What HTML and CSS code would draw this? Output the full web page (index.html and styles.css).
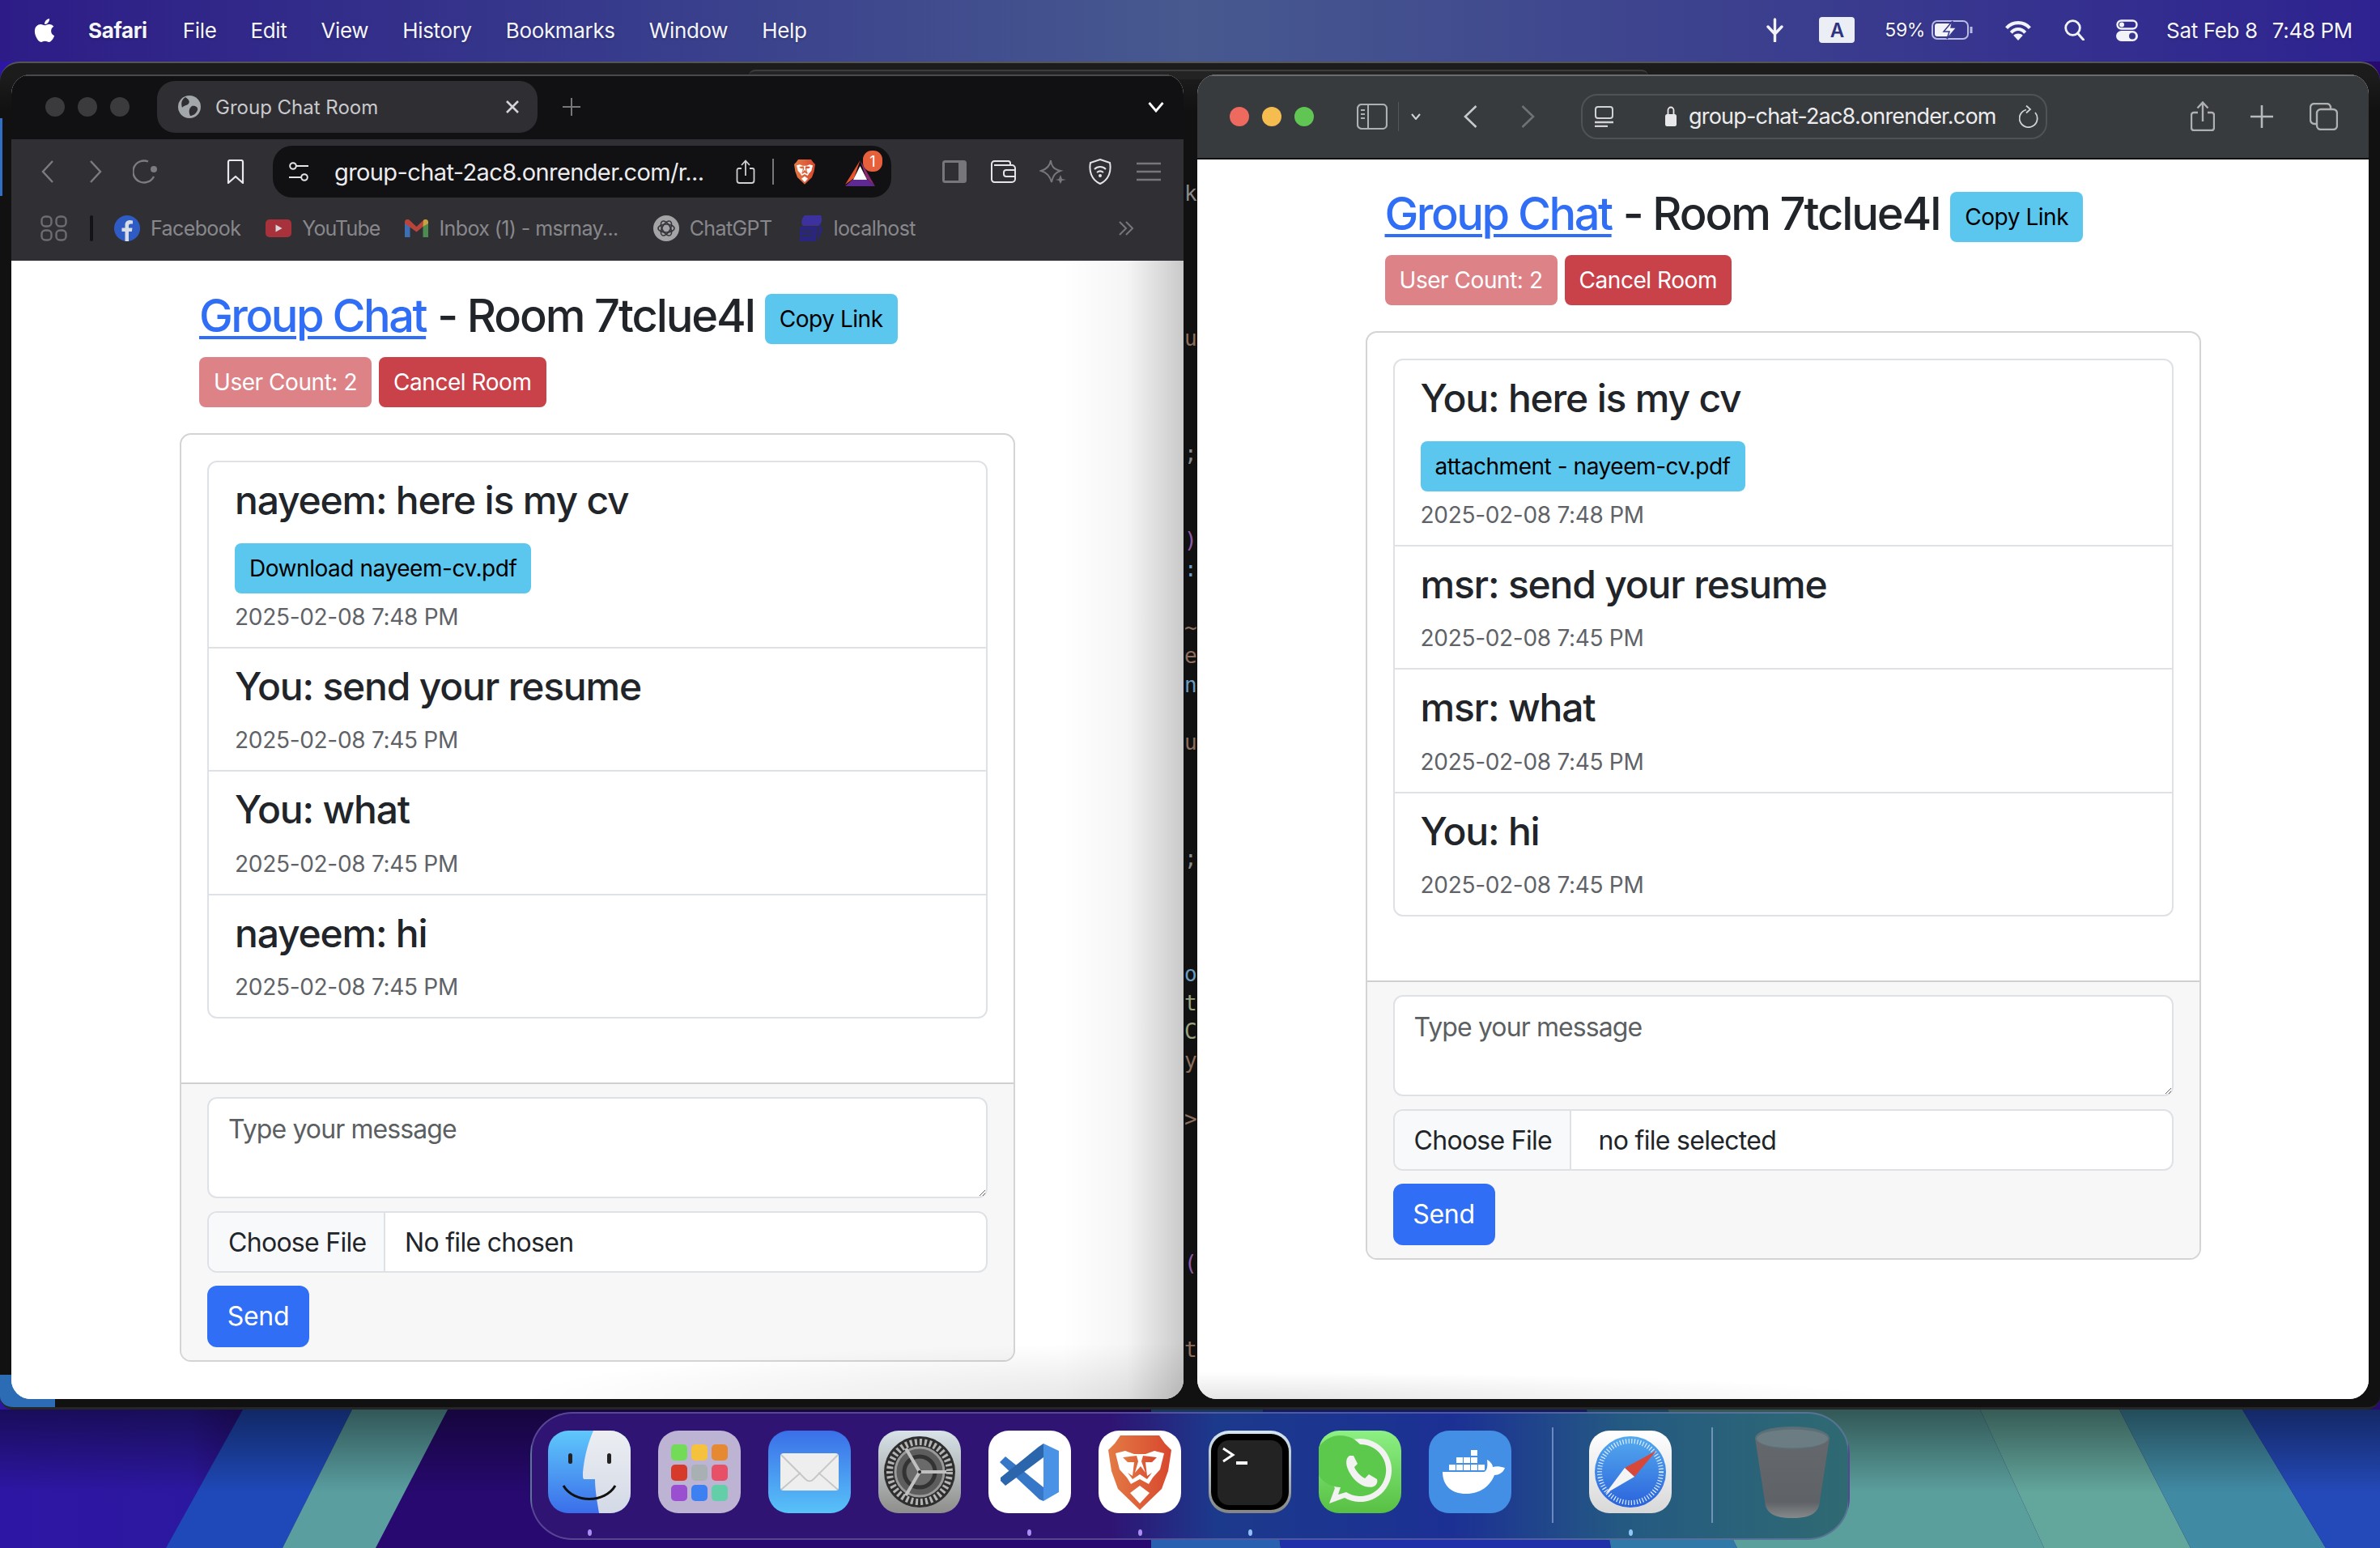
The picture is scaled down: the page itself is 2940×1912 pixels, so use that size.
FILE: index.html
```html
<!DOCTYPE html>
<html lang="en">
<head>
<meta charset="utf-8">
<title>Group Chat Room</title>
<link rel="stylesheet" href="styles.css">
</head>
<body>
<svg class="defs" width="0" height="0" aria-hidden="true">
  <defs>
    <linearGradient id="braveG" x1="0" x2="1" y1="0" y2="0"><stop offset="0" stop-color="#e37b45"/><stop offset="1" stop-color="#d8472e"/></linearGradient>
    <symbol id="lion" viewBox="0 0 102 102">
      <path fill="url(#braveG)" d="M27 6H75L82 16L90 24L86 50L78 72L51 98L24 72L16 50L12 24L20 16Z"/>
      <path fill="#fff" d="M21 28L33 25L44 29H58L69 25L81 28L76 48L67 58L62 66L51 60L40 66L35 58L26 48Z"/>
      <path fill="url(#braveG)" d="M30 33L47 31L49 38L45 52L52 44L58 52L53 38L55 31L72 33L66 39H58L60 56L66 52L60 60L51 54L42 60L36 52L42 56L44 39H36Z"/>
      <path fill="#fff" d="M51 68L63 77L51 90L39 77Z"/>
    </symbol>
  </defs>
</svg>

<div class="desktop">
  <svg class="wallpaper" viewBox="0 0 2940 1912" width="2940" height="1912" aria-hidden="true">
    <defs>
      <linearGradient id="wpBase" x1="0" x2="1" y1="0" y2="0"><stop offset="0" stop-color="#2e16a4"/><stop offset=".08" stop-color="#2c18a0"/><stop offset=".115" stop-color="#27096f"/><stop offset="1" stop-color="#27096f"/></linearGradient>
      <linearGradient id="wpTop" x1="0" x2="0" y1="0" y2="1"><stop offset="0" stop-color="#000" stop-opacity=".45"/><stop offset=".6" stop-color="#000" stop-opacity="0"/></linearGradient>
    </defs>
    <rect width="2940" height="1912" fill="url(#wpBase)"/>
    <polygon fill="#1f49b8" points="300,1741 435,1741 349,1912 205,1912"/>
    <polygon fill="#5a9ea0" points="435,1741 553,1741 464,1912 349,1912"/>
    <polygon fill="#2a60b0" points="1422,1741 1560,1741 1582,1912 1422,1912"/>
    <polygon fill="#2030a8" points="1560,1741 1960,1741 1990,1912 1582,1912"/>
    <polygon fill="#2f78a8" points="1960,1741 2060,1741 2146,1912 1990,1912"/>
    <polygon fill="#5b9f9d" points="2060,1741 2446,1741 2525,1912 2146,1912"/>
    <polygon fill="#63a69c" points="2446,1741 2618,1741 2706,1912 2525,1912"/>
    <polygon fill="#418aa3" points="2618,1741 2770,1741 2873,1912 2706,1912"/>
    <polygon fill="#2449b8" points="2770,1741 2940,1741 2940,1912 2873,1912"/>
    <rect y="1741" width="2940" height="171" fill="url(#wpTop)"/>
  </svg>

  <header class="menubar">
    <div class="menu-left">
      <svg class="apple" viewBox="0 0 384 512" width="28" height="33"><path fill="#fff" d="M318.7 268.7c-.2-36.7 16.4-64.4 50-84.8-18.8-26.9-47.2-41.7-84.7-44.6-35.5-2.8-74.3 20.7-88.5 20.7-15 0-49.4-19.7-76.4-19.7C63.3 141.2 4 184.8 4 273.5q0 39.3 14.4 81.2c12.8 36.7 59 126.7 107.2 125.2 25.2-.6 43-17.9 75.8-17.9 31.8 0 48.3 17.9 76.4 17.9 48.6-.7 90.4-82.5 102.6-119.3-65.2-30.7-61.7-90-61.7-91.9zm-56.6-164.2c27.3-32.4 24.8-61.9 24-72.5-24.1 1.4-52 16.4-67.9 34.9-17.5 19.8-27.8 44.3-25.6 71.9 26.1 2 49.9-11.4 69.5-34.3z"/></svg>
      <span class="app-name">Safari</span>
      <span>File</span><span>Edit</span><span>View</span><span>History</span><span>Bookmarks</span><span>Window</span><span>Help</span>
    </div>
    <div class="menu-right">
      <svg class="st-fork" viewBox="0 0 23 30" width="23" height="30"><path fill="none" stroke="#f2f3f8" stroke-width="3.4" stroke-linecap="round" stroke-linejoin="round" d="M11.5 2V29M3 11L11.5 20L20 11M11.5 8V14"/></svg>
      <span class="st-a">A</span>
      <span class="st-pct">59%</span>
      <svg class="st-batt" viewBox="0 0 51 24" width="51" height="24"><rect x="1" y="1" width="44" height="22" rx="6" fill="none" stroke="#b9bce0" stroke-width="2"/><rect x="4" y="4" width="20" height="16" rx="3" fill="#f2f3f8"/><path d="M49 8V16" stroke="#b9bce0" stroke-width="3"/><path fill="#f2f3f8" stroke="#37388c" stroke-width="1.5" d="M26 1L15 14H22L19 23L31 9H24Z"/></svg>
      <svg class="st-wifi" viewBox="0 0 34 26" width="34" height="25"><path fill="none" stroke="#f2f3f8" stroke-width="4.2" d="M2 10C10 1 24 1 32 10M8 16C13 10 21 10 26 16"/><path fill="#f2f3f8" d="M17 26L11 19.5C14 16.5 20 16.5 23 19.5Z"/></svg>
      <svg class="st-search" viewBox="0 0 25 26" width="25" height="26"><circle cx="10.5" cy="10.5" r="8.8" fill="none" stroke="#f2f3f8" stroke-width="2.8"/><path d="M16.5 17L23.5 25" stroke="#f2f3f8" stroke-width="3" stroke-linecap="round"/></svg>
      <svg class="st-cc" viewBox="0 0 27 27" width="27" height="27"><rect x="1.5" y="1.5" width="24" height="10" rx="5" fill="none" stroke="#f2f3f8" stroke-width="2.4"/><circle cx="7" cy="6.500" r="3" fill="#f2f3f8"/><rect y="14" width="27" height="13" rx="6.500" fill="#f2f3f8"/><circle cx="20" cy="20.500" r="4" fill="#37388c"/></svg>
      <span class="st-date">Sat Feb 8</span><span class="st-time">7:48 PM</span>
    </div>
  </header>

  <div class="back-window">
    <div class="back-tab"></div>
    <div class="back-blue"></div>
    <div class="back-status"></div>
    <pre class="code"><span class="c-g">k</span>




<span class="c-o">u</span>



<span class="c-g">;</span>


<span class="c-p">)</span>
<span class="c-b">:</span>

<span class="c-o">~</span>
<span class="c-o">e</span>
<span class="c-b">n</span>

<span class="c-o">u</span>



<span class="c-g">;</span>



<span class="c-b">o</span>
<span class="c-y">t</span>
<span class="c-y">C</span>
<span class="c-o">y</span>

<span class="c-o">&gt;</span>




<span class="c-p">(</span>


<span class="c-o">t</span></pre>
  </div>

  <section class="window brave">
    <div class="tabstrip">
      <div class="dots"><i></i><i></i><i></i></div>
      <div class="tab">
        <svg viewBox="0 0 28 28" width="28" height="28"><circle cx="14" cy="14" r="14" fill="#a3a7ab"/><path fill="#2f2f33" d="M9 2C13 5 15 7 13 10C10 13 7 12 5 15C4 11 3 6 9 2ZM17 13C22 12 25 15 24 18C22 23 18 25 15 25C13 21 13 16 17 13Z"/></svg>
        <span class="tab-title">Group Chat Room</span>
        <svg class="tab-x" viewBox="0 0 18 18" width="18" height="18"><path d="M2 2L16 16M16 2L2 16" stroke="#d4d4d8" stroke-width="2.6"/></svg>
      </div>
      <svg class="tab-plus" viewBox="0 0 22 22" width="22" height="22"><path d="M11 0V22M0 11H22" stroke="#77777b" stroke-width="2"/></svg>
      <svg class="tab-more" viewBox="0 0 20 14" width="20" height="14"><path d="M1.500 2L10 12L18.500 2" fill="none" stroke="#fff" stroke-width="2.800"/></svg>
    </div>
    <div class="bravebar">
      <div class="nav-row">
        <svg class="b-back" viewBox="0 0 15 28" width="15" height="28"><path d="M14 1L2 14L14 27" fill="none" stroke="#7b7b80" stroke-width="2.400"/></svg>
        <svg class="b-fwd" viewBox="0 0 15 28" width="15" height="28"><path d="M1 1L13 14L1 27" fill="none" stroke="#7b7b80" stroke-width="2.400"/></svg>
        <svg class="b-reload" viewBox="0 0 30 30" width="30" height="30"><path d="M26 21A13.500 13.500 0 1 1 19 2.500" fill="none" stroke="#7b7b80" stroke-width="2.400"/><circle cx="26" cy="12" r="4" fill="#7b7b80"/></svg>
        <svg class="b-mark" viewBox="0 0 22 30" width="22" height="30"><path d="M2 3A2 2 0 0 1 4 1H18A2 2 0 0 1 20 3V29L11 21L2 29Z" fill="none" stroke="#e9e9ec" stroke-width="2.200" stroke-linejoin="round"/></svg>
        <div class="omnibox">
          <svg viewBox="0 0 24 24" width="24" height="24"><circle cx="5" cy="5" r="3.800" fill="none" stroke="#e4e4e8" stroke-width="2"/><circle cx="19" cy="19" r="3.800" fill="none" stroke="#e4e4e8" stroke-width="2"/><path d="M9 5H24M0 19H15" stroke="#e4e4e8" stroke-width="2"/></svg>
          <span class="omni-text">group-chat-2ac8.onrender.com/r...</span>
          <svg class="omni-share" viewBox="0 0 24 30" width="24" height="30"><path d="M7 11H3.500A2 2 0 0 0 1.500 13V26A3 3 0 0 0 4.500 29H19.500A3 3 0 0 0 22.500 26V13A2 2 0 0 0 20.500 11H17M12 20V2M7 7L12 1.500L17 7" fill="none" stroke="#d0d0d4" stroke-width="1.800"/></svg>
          <i class="omni-div"></i>
          <svg class="omni-lion" width="34" height="36"><use href="#lion"/></svg>
          <div class="bat">
            <svg viewBox="0 0 37 32" width="37" height="32"><path fill="#e8532b" d="M18.500 0L0 30L11 22Z"/><path fill="#8c2a6f" d="M18.500 0L37 32L26 22Z"/><path fill="#fff" d="M18.500 7L27 24H10Z"/><path fill="#5e2a92" d="M0 32L9 24H28L37 32Z"/></svg>
            <span class="badge">1</span>
          </div>
        </div>
        <svg class="b-side" viewBox="0 0 30 28" width="30" height="28"><rect x="1.500" y="1.500" width="27" height="25" rx="2" fill="none" stroke="#77777b" stroke-width="3"/><rect x="20" y="1.500" width="9" height="25" fill="#77777b"/></svg>
        <svg class="b-wallet" viewBox="0 0 31 28" width="31" height="28"><path d="M24 6V3.500A2.500 2.500 0 0 0 21.500 1H4.500A3.500 3.500 0 0 0 1 4.500V23.500A3.500 3.500 0 0 0 4.500 27H26A4 4 0 0 0 30 23V10A4 4 0 0 0 26 6H4M30 12H19A3 3 0 0 0 16 15V17A3 3 0 0 0 19 20H30" fill="none" stroke="#e4e4e8" stroke-width="2"/></svg>
        <svg class="b-star" viewBox="0 0 33 30" width="33" height="30"><path d="M14 1C15 9 18 12 26 14C20 16 17 19 15 28C13 20 9 16 2 14C9 12 13 8 14 1Z" fill="none" stroke="#77777b" stroke-width="2"/><path d="M26 19L28 24L33 25L28 26L26 30L24 26L20 25L24 24Z" fill="#77777b"/></svg>
        <svg class="b-shield" viewBox="0 0 28 32" width="28" height="32"><path d="M14 1L26 5C28 15 25 26 14 31C3 26 0 15 2 5Z" fill="none" stroke="#e4e4e8" stroke-width="2"/><path d="M7 13C11 9 17 9 21 13M10 17C12.500 15 15.500 15 18 17" fill="none" stroke="#e4e4e8" stroke-width="2"/><circle cx="14" cy="21" r="2" fill="#e4e4e8"/></svg>
        <svg class="b-menu" viewBox="0 0 30 24" width="30" height="24"><path d="M0 2H30M0 12H30M0 22H30" stroke="#77777b" stroke-width="2.600"/></svg>
      </div>
      <div class="bm-row">
        <svg class="bm-apps" viewBox="0 0 33 32" width="33" height="32"><g fill="none" stroke="#6d6d71" stroke-width="2.400"><rect x="1.500" y="1.500" width="12" height="12" rx="4.500"/><rect x="19.500" y="1.500" width="12" height="12" rx="4.500"/><rect x="1.500" y="18.500" width="12" height="12" rx="4.500"/><rect x="19.500" y="18.500" width="12" height="12" rx="4.500"/></g></svg>
        <i class="bm-div"></i>
        <div class="bm">
          <svg viewBox="0 0 32 32" width="32" height="32"><circle cx="16" cy="16" r="16" fill="#2f5cc4"/><path fill="#d8dce4" d="M13.500 32V20H9.500V15.500H13.500V12C13.500 8 16 6 19.500 6L23 6.500V10.500H20.500C18.700 10.500 18 11.500 18 13V15.500H22.500L21.800 20H18V32Z"/></svg>
          <span>Facebook</span>
        </div>
        <div class="bm bm-yt">
          <svg viewBox="0 0 32 22" width="32" height="22"><rect width="32" height="22" rx="5" fill="#a8323c"/><path d="M12.500 6.500L20.500 11L12.500 15.500Z" fill="#d8d8dc"/></svg>
          <span>YouTube</span>
        </div>
        <div class="bm bm-mail">
          <svg viewBox="0 0 29 22" width="29" height="22"><path fill="#3e6fb5" d="M0 3V22H6.500V9Z"/><path fill="#4c8c50" d="M29 3V22H22.500V9Z"/><path fill="#b9443b" d="M0 3C0 0 4 -1 6 1L14.500 9L23 1L26 6L14.500 15.500L0 5Z"/><path fill="#c9a23d" d="M23 1C25 -1 29 0 29 3V5L22.500 9Z"/></svg>
          <span>Inbox (1) - msrnay...</span>
        </div>
        <div class="bm bm-gpt">
          <svg viewBox="0 0 32 32" width="32" height="32"><circle cx="16" cy="16" r="16" fill="#a4a4a6"/><g fill="none" stroke="#35353a" stroke-width="1.600"><ellipse cx="16" cy="16" rx="10" ry="5"/><ellipse cx="16" cy="16" rx="10" ry="5" transform="rotate(60 16 16)"/><ellipse cx="16" cy="16" rx="10" ry="5" transform="rotate(120 16 16)"/></g></svg>
          <span>ChatGPT</span>
        </div>
        <div class="bm">
          <svg viewBox="0 0 30 32" width="30" height="32"><path fill="#3d31a0" d="M8 0H28C30 4 29 10 26 13H6C3 10 4 4 8 0Z"/><path fill="#2a2580" d="M2 14H24L22 32H2ZM26 10L30 18L24 32Z"/><path d="M4 20H18M4 25H18" stroke="#303038" stroke-width="1.500"/></svg>
          <span>localhost</span>
        </div>
        <svg class="bm-more" viewBox="0 0 20 20" width="20" height="20"><path d="M2 2L10 10L2 18M10 2L18 10L10 18" fill="none" stroke="#77777b" stroke-width="2"/></svg>
      </div>
    </div>
    <main class="page page-left">
      <div class="wrap">
        <div class="head">
          <h3 class="title"><a href="#" class="home">Group Chat</a><span class="dash">- Room 7tclue4l</span><button class="btn btn-info">Copy Link</button></h3>
          <div class="meta"><button class="btn btn-faded">User Count: 2</button><button class="btn btn-danger">Cancel Room</button></div>
        </div>
        <div class="card">
          <div class="card-body">
            <ul class="list">
              <li class="item"><h4 class="msg">nayeem: here is my cv</h4><div class="attach"><button class="btn btn-info">Download nayeem-cv.pdf</button></div><small class="stamp">2025-02-08 7:48 PM</small></li>
              <li class="item"><h4 class="msg">You: send your resume</h4><small class="stamp">2025-02-08 7:45 PM</small></li>
              <li class="item"><h4 class="msg">You: what</h4><small class="stamp">2025-02-08 7:45 PM</small></li>
              <li class="item"><h4 class="msg">nayeem: hi</h4><small class="stamp">2025-02-08 7:45 PM</small></li>
            </ul>
          </div>
          <div class="card-footer">
            <textarea class="input" placeholder="Type your message"></textarea>
            <div class="file"><span class="file-btn">Choose File</span><span class="file-name">No file chosen</span></div>
            <button class="send">Send</button>
          </div>
        </div>
      </div>
      <div class="cast cast-left"></div>
    </main>
  </section>

  <section class="window safari">
    <div class="safaribar">
      <div class="lights"><i class="red"></i><i class="yellow"></i><i class="green"></i></div>
      <svg class="s-side" viewBox="0 0 38 32" width="38" height="32"><rect x="1" y="1" width="36" height="30" rx="5" fill="none" stroke="#aeb0b2" stroke-width="2.200"/><path d="M14 1V31" stroke="#aeb0b2" stroke-width="2"/><path d="M5 8H10M5 13H10M5 18H10" stroke="#aeb0b2" stroke-width="2"/></svg>
      <i class="s-div"></i>
      <svg class="s-chev" viewBox="0 0 12 8" width="12" height="8"><path d="M1 1L6 7L11 1" fill="none" stroke="#d0d2d4" stroke-width="2"/></svg>
      <svg class="s-back" viewBox="0 0 17 28" width="17" height="28"><path d="M15.500 1L2 14L15.500 27" fill="none" stroke="#c6c8ca" stroke-width="2.600"/></svg>
      <svg class="s-fwd" viewBox="0 0 17 28" width="17" height="28"><path d="M1.500 1L15 14L1.500 27" fill="none" stroke="#6f7274" stroke-width="2.600"/></svg>
      <div class="addr">
        <svg viewBox="0 0 23 26" width="23" height="26"><rect x="1" y="1" width="21" height="14" rx="3" fill="none" stroke="#d0d2d4" stroke-width="2"/><path d="M0 20H23M0 25H16" stroke="#d0d2d4" stroke-width="2.400"/></svg>
        <svg class="addr-lock" viewBox="0 0 14 25" width="14" height="25"><path d="M3.500 11V5A3.500 3.500 0 0 1 10.500 5V11" fill="none" stroke="#e8e8ea" stroke-width="1.800"/><rect y="10" width="14" height="15" rx="2.500" fill="#e8e8ea"/></svg>
        <span class="addr-text">group-chat-2ac8.onrender.com</span>
        <svg class="addr-reload" viewBox="0 0 24 28" width="24" height="28"><path d="M20 9A11 11 0 1 1 9 5.500" fill="none" stroke="#d0d2d4" stroke-width="1.800"/><path d="M9 0.500L14 5L9 9.500" fill="none" stroke="#d0d2d4" stroke-width="1.800"/></svg>
      </div>
      <svg class="s-share" viewBox="0 0 30 37" width="30" height="37"><path d="M9 14H4A3 3 0 0 0 1 17V33A3 3 0 0 0 4 36H26A3 3 0 0 0 29 33V17A3 3 0 0 0 26 14H21M15 25V2M8.500 8.500L15 1.500L21.500 8.500" fill="none" stroke="#aeb0b2" stroke-width="2.400"/></svg>
      <svg class="s-plus" viewBox="0 0 28 28" width="28" height="28"><path d="M14 0V28M0 14H28" stroke="#b6b8ba" stroke-width="2.600"/></svg>
      <svg class="s-tabs" viewBox="0 0 35 34" width="35" height="34"><rect x="9" y="8" width="25" height="25" rx="5" fill="none" stroke="#aeb0b2" stroke-width="2.400"/><path d="M9 26H6A5 5 0 0 1 1 21V6A5 5 0 0 1 6 1H21A5 5 0 0 1 26 6V8" fill="none" stroke="#aeb0b2" stroke-width="2.400"/></svg>
    </div>
    <main class="page page-right">
      <div class="wrap">
        <div class="head">
          <h3 class="title"><a href="#" class="home">Group Chat</a><span class="dash">- Room 7tclue4l</span><button class="btn btn-info">Copy Link</button></h3>
          <div class="meta"><button class="btn btn-faded">User Count: 2</button><button class="btn btn-danger">Cancel Room</button></div>
        </div>
        <div class="card">
          <div class="card-body">
            <ul class="list">
              <li class="item"><h4 class="msg">You: here is my cv</h4><div class="attach"><button class="btn btn-info">attachment - nayeem-cv.pdf</button></div><small class="stamp">2025-02-08 7:48 PM</small></li>
              <li class="item"><h4 class="msg">msr: send your resume</h4><small class="stamp">2025-02-08 7:45 PM</small></li>
              <li class="item"><h4 class="msg">msr: what</h4><small class="stamp">2025-02-08 7:45 PM</small></li>
              <li class="item"><h4 class="msg">You: hi</h4><small class="stamp">2025-02-08 7:45 PM</small></li>
            </ul>
          </div>
          <div class="card-footer">
            <textarea class="input" placeholder="Type your message"></textarea>
            <div class="file"><span class="file-btn">Choose File</span><span class="file-name file-name-safari">no file selected</span></div>
            <button class="send">Send</button>
          </div>
        </div>
      </div>
      <div class="cast cast-right"></div>
    </main>
  </section>

  <footer class="dock">
    <div class="dock-app">
      <svg viewBox="0 0 102 102" width="102" height="102"><defs><linearGradient id="fL" x1="0" x2="0" y1="0" y2="1"><stop offset="0" stop-color="#5fc8fb"/><stop offset="1" stop-color="#3a6eea"/></linearGradient><linearGradient id="fR" x1="0" x2="0" y1="0" y2="1"><stop offset="0" stop-color="#eceef2"/><stop offset="1" stop-color="#d3d9e6"/></linearGradient><clipPath id="sq"><rect width="102" height="102" rx="25"/></clipPath></defs><g clip-path="url(#sq)"><rect width="102" height="102" fill="url(#fL)"/><path fill="url(#fR)" d="M56 0H102V102H63C60 84 58 72 58 60H45C43 60 43 58 43 52C45 30 50 14 56 0Z"/><rect x="25" y="28" width="5" height="13" rx="2.500" fill="#222"/><rect x="73" y="28" width="5" height="13" rx="2.500" fill="#222"/><path d="M19 68C32 90 70 90 83 68" fill="none" stroke="#111" stroke-width="3"/></g></svg>
    </div>
    <div class="dock-app">
      <svg viewBox="0 0 102 102" width="102" height="102"><rect width="102" height="102" rx="25" fill="#bdb3d3"/><rect x="16" y="17" width="20" height="20" rx="5" fill="#72dc58"/><rect x="41" y="17" width="20" height="20" rx="5" fill="#f5c23e"/><rect x="66" y="17" width="20" height="20" rx="5" fill="#e58a33"/><rect x="16" y="42" width="20" height="20" rx="5" fill="#d63a2b"/><rect x="41" y="42" width="20" height="20" rx="5" fill="#a9b0b4"/><rect x="66" y="42" width="20" height="20" rx="5" fill="#e85068"/><rect x="16" y="67" width="20" height="20" rx="5" fill="#9a4ed0"/><rect x="41" y="67" width="20" height="20" rx="5" fill="#3d80f2"/><rect x="66" y="67" width="20" height="20" rx="5" fill="#62cfa8"/></svg>
    </div>
    <div class="dock-app">
      <svg viewBox="0 0 102 102" width="102" height="102"><defs><linearGradient id="mG" x1="0" x2="0" y1="0" y2="1"><stop offset="0" stop-color="#3a6fe8"/><stop offset="1" stop-color="#58c2f8"/></linearGradient></defs><rect width="102" height="102" rx="25" fill="url(#mG)"/><rect x="15" y="28" width="72" height="46" rx="4" fill="#eeeeee"/><path d="M16 30L46 60C49 63 53 63 56 60L86 30M16 73L40 52M86 73L62 52" fill="none" stroke="#c6c6c6" stroke-width="1.800"/></svg>
    </div>
    <div class="dock-app">
      <svg viewBox="0 0 102 102" width="102" height="102"><defs><linearGradient id="sG" x1="0" x2="0" y1="0" y2="1"><stop offset="0" stop-color="#d8e3e8"/><stop offset="1" stop-color="#8e8e8b"/></linearGradient></defs><rect width="102" height="102" rx="25" fill="url(#sG)"/><circle cx="51" cy="51" r="44" fill="#2e2e2e"/><circle cx="51" cy="51" r="37" fill="none" stroke="#b4b4b4" stroke-width="8" stroke-dasharray="3 3"/><circle cx="51" cy="51" r="30" fill="#5d5d5d" stroke="#9a9a9a" stroke-width="3"/><circle cx="51" cy="51" r="19" fill="#6a6a6a" stroke="#333" stroke-width="5"/><path d="M51 51H84M51 51L34 22M51 51L34 80" stroke="#c0c0c0" stroke-width="4"/><circle cx="51" cy="51" r="2" fill="#222"/></svg>
    </div>
    <div class="dock-app">
      <svg viewBox="0 0 102 102" width="102" height="102"><rect width="102" height="102" rx="25" fill="#fff"/><path fill="#3777c8" d="M14 39L21 32L68 70V87L63 85Z"/><path fill="#2b66ad" d="M68 16L62 20L15 58V62L21 68L68 33Z"/><path fill="#4a92e6" d="M68 16L87 25V76L68 87Z"/></svg>
    </div>
    <div class="dock-app">
      <svg width="102" height="102"><rect width="102" height="102" rx="25" fill="#fff"/><use href="#lion" width="102" height="102"/></svg>
    </div>
    <div class="dock-app">
      <svg viewBox="0 0 102 102" width="102" height="102"><defs><linearGradient id="tG" x1="0" x2="0" y1="0" y2="1"><stop offset="0" stop-color="#d4e6f2"/><stop offset="1" stop-color="#858585"/></linearGradient></defs><rect width="102" height="102" rx="25" fill="url(#tG)"/><rect x="3" y="4" width="96" height="94" rx="22" fill="#000"/><rect x="11" y="12" width="80" height="80" rx="14" fill="#232323"/><path d="M18 22L30 30L18 38" fill="none" stroke="#fff" stroke-width="3"/><rect x="34" y="38" width="14" height="4" fill="#fff"/></svg>
    </div>
    <div class="dock-app">
      <svg viewBox="0 0 102 102" width="102" height="102"><defs><linearGradient id="wG" x1="0" x2="0" y1="0" y2="1"><stop offset="0" stop-color="#8cf083"/><stop offset="1" stop-color="#57c043"/></linearGradient></defs><rect width="102" height="102" rx="25" fill="url(#wG)"/><path fill="#f2f2f2" d="M51 10A39 39 0 1 1 32 83L13 90L20 71A39 39 0 0 1 51 10Z"/><path fill="#5cc94c" d="M51 17A32 32 0 1 0 27 70L24 79L34 76A32 32 0 1 0 51 17Z"/><path fill="#f2f2f2" d="M38 31C33 34 32 43 40 55C48 67 60 72 68 69C72 67 73 63 72 60L62 54L57 59C51 56 46 50 44 45L48 41L43 31Z"/></svg>
    </div>
    <div class="dock-app">
      <svg viewBox="0 0 102 102" width="102" height="102"><rect width="102" height="102" rx="25" fill="#448fe6"/><g fill="#fff"><rect x="25" y="42" width="8" height="7"/><rect x="34" y="42" width="8" height="7"/><rect x="43" y="42" width="8" height="7"/><rect x="52" y="42" width="8" height="7"/><rect x="61" y="42" width="8" height="7"/><rect x="34" y="33" width="8" height="7"/><rect x="43" y="33" width="8" height="7"/><rect x="52" y="33" width="8" height="7"/><rect x="52" y="24" width="8" height="7"/><path d="M17 51H68C72 50 73 44 72 36C76 38 79 42 79 45C83 44 87 44 94 46C92 52 86 55 81 55C76 68 64 78 46 78C28 78 17 68 17 51Z"/></g></svg>
    </div>
    <i class="dock-sep dock-sep-a"></i>
    <div class="dock-app">
      <svg viewBox="0 0 102 102" width="102" height="102"><defs><linearGradient id="saB" x1="0" x2="0" y1="0" y2="1"><stop offset="0" stop-color="#fff"/><stop offset="1" stop-color="#d8d8d8"/></linearGradient><linearGradient id="saC" x1="0" x2="0" y1="0" y2="1"><stop offset="0" stop-color="#54aaee"/><stop offset="1" stop-color="#2a62dc"/></linearGradient></defs><rect width="102" height="102" rx="25" fill="url(#saB)"/><circle cx="51" cy="51" r="44" fill="url(#saC)"/><circle cx="51" cy="51" r="38" fill="none" stroke="#dfeefc" stroke-width="6" stroke-dasharray="1.200 2.400"/><path fill="#d8483a" d="M83 25L44 46L56 57Z"/><path fill="#f4f4f4" d="M20 78L44 46L56 57Z"/></svg>
    </div>
    <i class="dock-sep dock-sep-b"></i>
    <div class="dock-app dock-trash">
      <svg viewBox="0 0 92 113" width="92" height="113"><defs><linearGradient id="trG" x1="0" x2="0" y1="0" y2="1"><stop offset="0" stop-color="#64686c"/><stop offset=".8" stop-color="#5f6367"/><stop offset="1" stop-color="#86898b"/></linearGradient></defs><path fill="url(#trG)" d="M0 14L12 92C13 106 22 113 46 113C70 113 79 106 80 92L92 14Z"/><ellipse cx="46" cy="14" rx="46" ry="14" fill="#5c6f76"/><ellipse cx="46" cy="15" rx="44" ry="11.500" fill="#6b7c82"/></svg>
    </div>
    <i class="run run-finder"></i>
    <i class="run run-code"></i>
    <i class="run run-brave"></i>
    <i class="run run-term"></i>
    <i class="run run-safari"></i>
  </footer>
</div>
</body>
</html>
```

FILE: styles.css
```css
* { box-sizing: border-box; }
html, body { margin: 0; padding: 0; background: #27096f; }
body { font-family: Inter, "Liberation Sans", sans-serif; color: #212529; }
i { font-style: normal; display: block; }
svg { display: block; flex: none; }
.defs { position: absolute; }

.desktop { position: relative; width: 2940px; height: 1912px; overflow: hidden; }
.wallpaper { position: absolute; left: 0; top: 0; }

/* menu bar */
.menubar {
  position: relative; height: 76px; display: flex; justify-content: space-between; align-items: center;
  padding: 0 34px 2px 41px; color: #f4f5fb; font-size: 26px; letter-spacing: -.35px; text-shadow: 0 1px 3px rgba(0,0,0,.3);
  background: linear-gradient(90deg, #2d1c87 0%, #373a8c 25%, #47598f 50%, #3b3e8e 75%, #2e2290 100%);
}
.menu-left { display: flex; align-items: center; gap: 42px; }
.apple { margin-right: -2px; }
.app-name { font-weight: 700; margin-right: 2px; }
.menu-right { display: flex; align-items: center; }
.st-a { margin-left: 43px; width: 44px; height: 32px; border-radius: 4px; background: #eceef5; color: #2f3380; font-size: 24px; font-weight: 600; display: flex; align-items: center; justify-content: center; text-shadow: none; }
.st-pct { margin-left: 37px; font-size: 23px; }
.st-batt { margin-left: 8px; }
.st-wifi { margin-left: 39px; }
.st-search { margin-left: 40px; }
.st-cc { margin-left: 39px; }
.st-date { margin-left: 35px; }
.st-time { margin-left: 18px; }

/* window behind */
.back-window {
  position: absolute; left: 0; top: 76px; width: 2940px; height: 1665px;
  background: linear-gradient(#1c1c1c 0, #1c1c1c 16px, #111 60px); border-radius: 24px 24px 16px 16px;
  border-top: 2px solid #555; border-bottom: 3px solid #262626; overflow: hidden;
}
.back-tab { position: absolute; left: 925px; top: 8px; width: 1111px; height: 12px; border-radius: 8px 8px 0 0; border-top: 2px solid #3c3c3c; background: #232323; }
.back-blue { position: absolute; left: 0; top: 68px; width: 3px; height: 96px; background: #2f6fc4; }
.back-status { position: absolute; left: 0; bottom: 0; width: 68px; height: 40px; background: #2b6cb4; }
.code {
  position: absolute; left: 1463px; top: 144px; width: 16px; margin: 0;
  font: 26px/35.7px "DejaVu Sans Mono", monospace; color: #888;
}
.c-g { color: #8a8a8a; }
.c-o { color: #8d6e5c; }
.c-p { color: #8f5aa3; }
.c-b { color: #6c9cc0; }
.c-y { color: #9aa27e; }

/* windows */
.window { position: absolute; top: 92px; height: 1636px; border-radius: 24px; overflow: hidden; display: flex; flex-direction: column; background: #fff; }
.brave { left: 14px; width: 1448px; }
.safari { left: 1479px; width: 1447px; }

.tabstrip { height: 80px; flex: none; background: #111113; display: flex; align-items: center; box-shadow: inset 0 2px 0 #4a4a4c; }
.dots { display: flex; gap: 16px; margin-left: 42px; }
.dots i { width: 24px; height: 24px; border-radius: 50%; background: #3b3b3d; }
.tab { margin-left: 34px; width: 470px; height: 64px; border-radius: 22px; background: #2f2f33; display: flex; align-items: center; padding: 0 22px 0 26px; }
.tab-title { margin-left: 18px; font-size: 24px; color: #c9c9cd; }
.tab-x { margin-left: auto; }
.tab-plus { margin-left: 31px; }
.tab-more { margin-left: 701px; }

.bravebar { flex: none; height: 150px; background: #303034; padding-top: 8px; }
.nav-row { display: flex; align-items: center; height: 64px; }
.b-back { margin-left: 37px; }
.b-fwd { margin-left: 45px; }
.b-reload { margin-left: 38px; }
.b-mark { margin-left: 86px; }
.omnibox { margin-left: 35px; width: 764px; height: 64px; border-radius: 24px; background: #111113; display: flex; align-items: center; padding-left: 20px; }
.omni-text { margin-left: 32px; width: 462px; font-size: 29px; letter-spacing: -.6px; color: #ececef; white-space: nowrap; }
.omni-share { margin-left: 34px; }
.omni-div { margin-left: 21px; width: 2px; height: 32px; background: #77777b; }
.omni-lion { margin-left: 21px; }
.bat { position: relative; margin-left: 33px; margin-top: 4px; }
.badge { position: absolute; left: 22px; top: -12px; width: 24px; height: 26px; border-radius: 11px; background: #e6603c; color: #fff; font-size: 18px; display: flex; align-items: center; justify-content: center; }
.b-side { margin-left: 63px; }
.b-wallet { margin-left: 30px; }
.b-star { margin-left: 29px; }
.b-shield { margin-left: 28px; }
.b-menu { margin-left: 31px; }

.bm-row { display: flex; align-items: center; height: 60px; margin-top: 8px; padding-left: 36px; }
.bm-div { margin-left: 28px; width: 4px; height: 32px; border-radius: 2px; background: #141416; }
.bm { display: flex; align-items: center; gap: 13px; margin-left: 33px; font-size: 25px; letter-spacing: -.6px; color: #88888c; white-space: nowrap; }
.bm-div + .bm { margin-left: 26px; }
.bm-yt { margin-left: 31px; letter-spacing: -.9px; }
.bm-mail { margin-left: 31px; }
.bm-gpt { margin-left: 43px; }
.bm-more { margin-left: auto; margin-right: 61px; }

.safaribar { flex: none; height: 105px; background: #383b3d; display: flex; align-items: center; box-shadow: inset 0 2px 0 #6a6c6e; border-bottom: 2px solid #111; }
.lights { display: flex; gap: 16px; margin-left: 40px; }
.lights i { width: 24px; height: 24px; border-radius: 50%; }
.red { background: #ee6a5f; }
.yellow { background: #f5bd4f; }
.green { background: #61c554; }
.s-side { margin-left: 53px; }
.s-div { margin-left: 13px; width: 1px; height: 36px; background: #55585a; }
.s-chev { margin-left: 15px; }
.s-back { margin-left: 53px; }
.s-fwd { margin-left: 54px; }
.addr { margin-left: 57px; width: 576px; height: 56px; border: 2px solid #505355; border-radius: 20px; display: flex; align-items: center; padding: 0 9px 0 15px; }
.addr-lock { margin-left: 64px; }
.addr-text { margin-left: 15px; font-size: 27px; letter-spacing: -.8px; color: #ececee; white-space: nowrap; }
.addr-reload { margin-left: auto; }
.s-share { margin-left: 177px; }
.s-plus { margin-left: 44px; }
.s-tabs { margin-left: 45px; }

/* the chat page */
.page { position: relative; flex: 1; background: #fff; }
.page-left { padding-top: 41px; }
.page-right { padding-top: 40px; }
.wrap { width: 1080px; margin: 0 auto; padding: 0 24px; }
.head { padding-left: 24px; }
.title { margin: 0; display: flex; align-items: center; height: 62px; font-size: 56px; font-weight: 500; letter-spacing: -2.100px; line-height: 1.2; white-space: nowrap; }
.home { margin-bottom: 6px; color: #316ef6; letter-spacing: -2.500px; text-decoration: underline; text-underline-offset: 5px; text-decoration-thickness: 4px; }
.dash { margin: 0 0 6px 14px; }
.title .btn { margin-left: 13px; }
.meta { display: flex; gap: 9px; margin-top: 16px; }
.btn { border: 0; height: 62px; padding: 0 18px; border-radius: 8px; font: 400 28px/1 Inter, "Liberation Sans", sans-serif; letter-spacing: -.45px; white-space: nowrap; }
.btn-info { background: #5bc7ee; color: #000; }
.btn-faded { background: #dd8388; color: #fff; }
.btn-danger { background: #c9424a; color: #fff; }

.card { margin-top: 32px; border: 2px solid #d3d4d5; border-radius: 14px; overflow: hidden; }
.card-body { padding: 32px 32px 79px; }
.list { margin: 0; padding: 0; list-style: none; border: 2px solid #dee2e6; border-radius: 12px; }
.item { padding: 18px 32px 16px; }
.item + .item { border-top: 2px solid #dee2e6; }
.msg { margin: 0 0 17px; font-size: 48px; font-weight: 500; line-height: 1.2; letter-spacing: -1.200px; }
.attach { padding-top: 7px; margin-bottom: 8px; }
.stamp { display: block; font-size: 28px; line-height: 42px; letter-spacing: -.3px; color: #5f6368; }

.card-footer { background: #f7f7f7; border-top: 2px solid #cfd0d2; padding: 16px 32px; }
.input { display: block; width: 100%; height: 125px; padding: 14px 24px; border: 2px solid #dee2e6; border-radius: 12px; background: #fff; font: 400 32px/1.5 Inter, "Liberation Sans", sans-serif; letter-spacing: -.9px; color: #212529; outline: 0; }
.input::placeholder { color: #5c5f62; opacity: 1; }
.file { display: flex; height: 76px; margin-top: 16px; border: 2px solid #dee2e6; border-radius: 12px; background: #fff; overflow: hidden; font-size: 32px; letter-spacing: -.7px; align-items: stretch; }
.file-btn { width: 218px; background: #f8f9fa; border-right: 2px solid #dee2e6; display: flex; align-items: center; padding-left: 24px; }
.file-name { display: flex; align-items: center; padding-left: 24px; }
.file-name-safari { padding-left: 34px; }
.send { display: block; margin-top: 16px; width: 126px; height: 76px; border: 0; border-radius: 12px; background: #316ef6; color: #fff; font: 400 32px/1 Inter, "Liberation Sans", sans-serif; letter-spacing: -.3px; }

.cast { position: absolute; inset: 0; pointer-events: none; }
.cast-left { background: radial-gradient(ellipse 820px 70px at 100% 100%, rgba(0,0,0,.1), transparent), linear-gradient(90deg, transparent calc(100% - 150px), rgba(0,0,0,.04) calc(100% - 70px), rgba(0,0,0,.21) 100%); }
.cast-right { background: radial-gradient(ellipse 860px 34px at 0 100%, rgba(0,0,0,.1), transparent); }

/* dock */
.dock {
  position: absolute; left: 655px; top: 1744px; width: 1630px; height: 158px; border-radius: 52px;
  border: 2px solid rgba(140,130,190,.45); display: flex; align-items: flex-start; padding: 21px 0 0 20px; gap: 34px;
  background: linear-gradient(90deg, #2f1474 0%, #2f1474 44%, #1c3a8c 52%, #1c3094 70%, #245a82 83%, #2f6a72 100%);
}
.dock-sep { width: 2px; height: 118px; margin-top: -4px; background: rgba(170,190,235,.55); }
.dock-sep-a { margin-left: 16px; margin-right: 10px; }
.dock-sep-b { margin-left: 15px; margin-right: 18px; }
.dock-trash { margin-top: -5px; }
.run { position: absolute; top: 143px; width: 5px; height: 8px; border-radius: 50%; background: #ab8ff5; }
.run-finder { left: 69px; }
.run-code { left: 612px; }
.run-brave { left: 749px; }
.run-term { left: 885px; background: #8fc0f8; }
.run-safari { left: 1355px; background: #8fc8f8; }
```
